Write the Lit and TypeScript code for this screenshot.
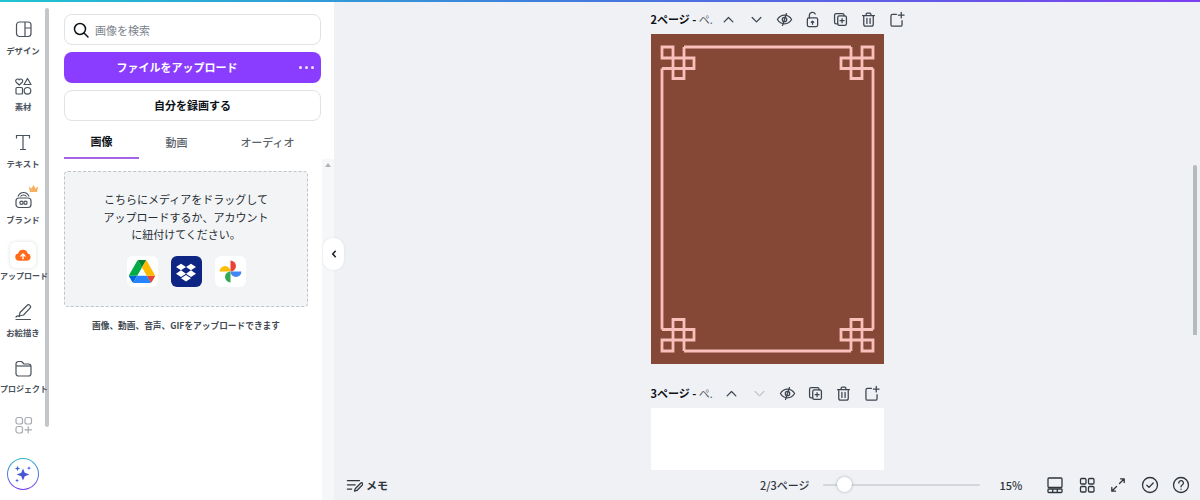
import { LitElement, html, svg, css } from 'lit';
import { customElement } from 'lit/decorators.js';

const line = (body: unknown, size = 19) => html`<svg width=${size} height=${size} viewBox="0 0 24 24" fill="none" stroke="currentColor" stroke-width="1.6" stroke-linecap="round" stroke-linejoin="round">${body}</svg>`;

const railIcons = {
    design: html`<svg width="24" height="24" viewBox="0 0 24 24" fill="none" stroke="currentColor" stroke-width="1.2"><rect x="5.5" y="5" width="14.5" height="14.5" rx="3"/><path d="M14 5v14.5M14 11h6"/></svg>`,
    elements: html`<svg width="24" height="24" viewBox="0 0 24 24" fill="none" stroke="currentColor" stroke-width="1.2" stroke-linejoin="round"><path d="M8.2 11l-3-2.800a1.900 1.900 0 0 1 0-2.600 1.900 1.900 0 0 1 3 .3 1.900 1.900 0 0 1 3-.3 1.900 1.900 0 0 1 0 2.600z"/><path d="M16.500 4.500l3.500 6h-7z"/><rect x="5" y="13.500" width="6.500" height="6.500" rx="1"/><circle cx="16.500" cy="16.800" r="3.300"/></svg>`,
    text: html`<svg width="24" height="24" viewBox="0 0 24 24" fill="none" stroke="currentColor" stroke-width="1.2" stroke-linecap="round"><path d="M5.500 8V5.500h13V8M12 5.500v14M9.500 19.500h5"/></svg>`,
    brand: html`<svg width="24" height="24" viewBox="0 0 24 24" fill="none" stroke="currentColor" stroke-width="1.2"><rect x="5" y="11" width="15" height="9.500" rx="3"/><path d="M7 9.500c1-2.500 3-4 5.500-4s4.500 1.500 5.500 4M9.500 9.500c.7-1 1.700-1.500 3-1.500s2.300.5 3 1.500"/><circle cx="10.500" cy="15.700" r="1.600"/><circle cx="14.500" cy="15.700" r="1.600"/></svg>`,
    draw: html`<svg width="24" height="24" viewBox="0 0 24 24" fill="none" stroke="currentColor" stroke-width="1.2" stroke-linecap="round" stroke-linejoin="round"><path d="M9 12.500l7-7a2 2 0 0 1 3 2.700l-6.500 6.800-4.300 1z"/><path d="M5 19.500h14.500M5 17c1-1 2.500-1.200 3.500-.5"/></svg>`,
    folder: html`<svg width="24" height="24" viewBox="0 0 24 24" fill="none" stroke="currentColor" stroke-width="1.2" stroke-linejoin="round"><path d="M5 8a2.500 2.500 0 0 1 2.500-2.500h3L13 8h4.500a2.500 2.500 0 0 1 2.500 2.500v7a2.500 2.500 0 0 1-2.500 2.500h-10A2.500 2.500 0 0 1 5 17.500z"/><path d="M5 10h15"/></svg>`,
    apps: html`<svg width="24" height="24" viewBox="0 0 24 24" fill="none" stroke="currentColor" stroke-width="1.2" stroke-linecap="round"><rect x="5" y="4.500" width="6.500" height="6.500" rx="2"/><rect x="14" y="4.500" width="6.500" height="6.500" rx="2"/><rect x="5" y="13.500" width="6.500" height="6.500" rx="2"/><path d="M17.200 13.500v6.500M14 16.800h6.500"/></svg>`,
};

const pageIcons = {
    up: line(svg`<path d="M6.500 15l5.500-5.500 5.500 5.500"/>`),
    down: line(svg`<path d="M6.500 9.500l5.500 5.500 5.500-5.500"/>`),
    eye: line(svg`<path d="M3 12s3.500-5.500 9-5.500 9 5.500 9 5.500-3.500 5.500-9 5.500-9-5.500-9-5.500z"/><circle cx="12" cy="12" r="2.800"/><path d="M14.500 4.500L9.500 19.500"/>`),
    lock: line(svg`<rect x="5.500" y="10" width="13" height="11" rx="2"/><path d="M8 10V6.500a4 4 0 0 1 7.500-1.500M12 18v-4M10.500 15.500L12 14l1.500 1.500"/>`),
    copy: line(svg`<path d="M8.500 17.500h-2a2 2 0 0 1-2-2v-9a2 2 0 0 1 2-2h8a2 2 0 0 1 2 2v1"/><rect x="8.500" y="7.500" width="11" height="12" rx="2"/><path d="M14 11v5M11.500 13.500h5"/>`),
    trash: line(svg`<path d="M4.500 7h15M9 7V5.500A1.500 1.500 0 0 1 10.500 4h3A1.500 1.500 0 0 1 15 5.500V7M6 7v11a2.500 2.500 0 0 0 2.500 2.500h7A2.500 2.500 0 0 0 18 18V7M10 10.500v6.500M14 10.500v6.500"/>`),
    add: line(svg`<path d="M12 5.500H7a2 2 0 0 0-2 2v11a2 2 0 0 0 2 2h10a2 2 0 0 0 2-2v-5M18 3v7M14.500 6.500h7"/>`),
};

const corners = [
    '',
    'translate(233 0) scale(-1 1)',
    'translate(0 330) scale(1 -1)',
    'translate(233 330) scale(-1 -1)',
];

const pageTwo = html`<svg width="233" height="330" viewBox="0 0 233 330" fill="none" stroke="#f9bfba" stroke-width="2.8">
    <path d="M33 13H200M33 317H200M11 34.500V295.500M222 34.500V295.500"/>
    ${corners.map(t => svg`<path transform=${t} d="M11 13h11v11H11zM22 24h11v10.500H22zM33 24h10v10.500H33zM22 34.500h11v10H22zM33 13v11M11 34.500h11"/>`)}
</svg>`;

const pages = [
    { title: '2ページ - ', tail: 'ペ.', titleWidth: 64, icons: [['up'], ['down'], ['eye'], ['lock'], ['copy'], ['trash'], ['add']] },
    { title: '3ページ - ', tail: 'ペ.', titleWidth: 67, icons: [['up'], ['down', 'off'], ['eye'], ['copy'], ['trash'], ['add']] },
];

const railItems = [
    { icon: railIcons.design, label: 'デザイン' },
    { icon: railIcons.elements, label: '素材' },
    { icon: railIcons.text, label: 'テキスト' },
    { icon: railIcons.brand, label: 'ブランド', crown: true },
    { icon: null, label: 'アップロード', long: true },
    { icon: railIcons.draw, label: 'お絵描き' },
    { icon: railIcons.folder, label: 'プロジェクト', long: true },
];

@customElement('app-root')
export class AppRoot extends LitElement {
    static styles = css`
        :host {
            display: block;
            position: relative;
            width: 1200px;
            height: 500px;
            overflow: hidden;
            background: #fff;
            color: #0d1216;
            font-family: "Noto Sans CJK JP", "Noto Sans", sans-serif;
            font-size: 11px;
        }
        .topbar {
            height: 2px;
            background: linear-gradient(90deg, #1fc4d0 0%, #3f7fdc 45%, #7d3ff0 100%);
        }
        .layout {
            display: flex;
            height: 498px;
        }

        .rail {
            position: relative;
            width: 50px;
            flex: none;
            display: flex;
            flex-direction: column;
            align-items: center;
            padding: 15px 4px 10px 0;
            box-sizing: border-box;
            color: #4a525c;
        }
        .rail-item {
            position: relative;
            z-index: 1;
            height: 56.5px;
            width: 46px;
            display: flex;
            flex-direction: column;
            align-items: center;
            flex: none;
        }
        .rail-item.short { height: 24px; color: #a4aab1; }
        .rail-item svg { display: block; flex: none; }
        .rail-label {
            margin-top: 1.5px;
            font-size: 8.4px;
            line-height: 14px;
            font-weight: 700;
            white-space: nowrap;
        }
        .rail-label.long {
            font-size: 8px;
            padding-left: 2px;
        }
        .crown { position: absolute; left: 28px; top: -3px; }
        .upload-tile {
            width: 26px;
            height: 26px;
            margin-top: -1px;
            margin-bottom: -1px;
            border-radius: 6px;
            background: #fff;
            box-shadow: 0 0 4px rgba(30, 40, 60, 0.14);
            display: flex;
            align-items: center;
            justify-content: center;
        }
        .magic {
            margin-top: auto;
            width: 32px;
            height: 32px;
            border-radius: 50%;
            box-sizing: border-box;
            padding: 1px;
            background: linear-gradient(180deg, #26b5c9, #7d3ff0);
            flex: none;
        }
        .magic div {
            width: 100%;
            height: 100%;
            border-radius: 50%;
            background: #fff;
            display: flex;
            align-items: center;
            justify-content: center;
        }
        .rail-thumb {
            position: absolute;
            left: 45px;
            top: 6px;
            width: 4px;
            height: 419px;
            border-radius: 2px;
            background: #c3c7ca;
        }

        .panel {
            width: 284px;
            flex: none;
            display: flex;
            flex-direction: column;
            background: #fff;
        }
        .tools {
            padding: 12px 13px 0 14px;
            display: flex;
            flex-direction: column;
            gap: 7px;
        }
        .search, .btn {
            height: 31px;
            box-sizing: border-box;
            border-radius: 8px;
            display: flex;
            align-items: center;
        }
        .search {
            border: 1px solid #dfe3e6;
            padding-left: 7px;
            gap: 5px;
            color: #7b848c;
        }
        .btn {
            justify-content: center;
            font-weight: 700;
            border: 1px solid #dfe3e6;
            padding-bottom: 2px;
        }
        .btn.primary {
            position: relative;
            border: none;
            background: #8b3dff;
            color: #fff;
            padding-right: 31px;
        }
        .dots {
            position: absolute;
            right: 7px;
            top: 14px;
            display: flex;
            gap: 3px;
        }
        .dots i {
            width: 3px;
            height: 3px;
            border-radius: 50%;
            background: #f0e6ff;
        }
        .tabs {
            display: flex;
            padding: 0 13px 0 14px;
            height: 38px;
        }
        .tab {
            width: 75px;
            flex: none;
            display: flex;
            align-items: center;
            justify-content: center;
            padding-top: 4px;
            box-sizing: border-box;
            color: #59626b;
            font-weight: 500;
        }
        .tab.wide { flex: 1; width: auto; }
        .tab.active {
            color: #0d1216;
            font-weight: 700;
            border-bottom: 2px solid #a564e6;
        }
        .panel-body {
            flex: 1;
            display: flex;
            min-height: 0;
        }
        .panel-content {
            flex: 1;
            padding: 12px 14px 0;
        }
        .gutter {
            width: 12px;
            flex: none;
            background: #f6f7f8;
            display: flex;
            justify-content: center;
            padding-top: 4px;
            box-sizing: border-box;
        }
        .gutter i {
            width: 0;
            height: 0;
            border: 3px solid transparent;
            border-top: 0;
            border-bottom: 4px solid #b0b4b8;
        }
        .drop {
            height: 136px;
            box-sizing: border-box;
            background: #f2f4f6;
            border: 1px dashed #c0c4c9;
            border-radius: 4px;
            padding-top: 19px;
            text-align: center;
            line-height: 17.5px;
            color: #262d33;
        }
        .services {
            display: flex;
            justify-content: center;
            gap: 13px;
            margin-top: 12.5px;
        }
        .tile {
            width: 31px;
            height: 31px;
            border-radius: 6px;
            background: #fff;
            display: flex;
            align-items: center;
            justify-content: center;
        }
        .tile.dropbox { background: #0e2583; }
        .caption {
            margin-top: 12px;
            text-align: center;
            font-size: 8.7px;
            line-height: 14px;
            font-weight: 700;
            color: #414952;
            white-space: nowrap;
        }

        .main {
            flex: 1;
            min-width: 0;
            display: flex;
            flex-direction: column;
            background: #f0f1f5;
        }
        .canvas {
            flex: 1;
            min-height: 0;
            overflow: hidden;
            display: flex;
            flex-direction: column;
            align-items: center;
            padding-top: 5px;
        }
        .page-wrap { width: 233px; flex: none; }
        .page-wrap + .page-wrap { margin-top: 17px; }
        .page-head {
            height: 25px;
            margin-bottom: 2px;
            display: flex;
            align-items: center;
            white-space: nowrap;
            color: #3d4550;
        }
        .page-title {
            flex: none;
            font-weight: 700;
            color: #0d1216;
            padding-bottom: 1px;
        }
        .page-title span { font-weight: 400; color: #59626b; }
        .page-btn {
            width: 28px;
            flex: none;
            display: flex;
            justify-content: center;
        }
        .page-btn.off { color: #c1c6cc; }
        .page {
            width: 233px;
            height: 330px;
        }
        .page svg { display: block; }
        .page.filled { background: #854836; }
        .page.blank { background: #fff; }

        .footer {
            height: 30px;
            flex: none;
            display: flex;
            align-items: center;
            padding: 0 3px 0 12px;
            color: #2e353c;
            font-weight: 500;
        }
        .memo {
            display: flex;
            align-items: center;
            gap: 3px;
            font-weight: 700;
        }
        .pager { margin-left: auto; }
        .slider {
            position: relative;
            width: 157px;
            height: 2px;
            margin: 0 20px 0 13px;
            background: #d3d6da;
            border-radius: 1px;
        }
        .slider i {
            position: absolute;
            left: 14px;
            top: -7px;
            width: 15px;
            height: 15px;
            border-radius: 50%;
            background: #fff;
            box-shadow: 0 0 3px rgba(30, 40, 60, 0.35);
        }
        .zoom { width: 22px; margin-right: 18px; }
        .foot-btn {
            width: 31.5px;
            display: flex;
            justify-content: center;
        }

        .collapse {
            position: absolute;
            left: 323px;
            top: 238px;
            width: 21px;
            height: 32px;
            border-radius: 10px;
            background: #fff;
            display: flex;
            align-items: center;
            justify-content: center;
            box-shadow: 0 0 3px rgba(30, 40, 60, 0.08);
        }
        .main-thumb {
            position: absolute;
            left: 1193px;
            top: 165px;
            width: 4px;
            height: 170px;
            background: #b6b9bd;
            border-radius: 2px 2px 0 0;
        }
    `;

    render() {
        return html`
            <div class="topbar"></div>
            <div class="layout">
                ${this.renderRail()}
                ${this.renderPanel()}
                <div class="main">
                    <div class="canvas">
                        ${pages.map((p, i) => html`
                            <div class="page-wrap">
                                <div class="page-head">
                                    <div class="page-title" style="width:${p.titleWidth}px">${p.title}<span>${p.tail}</span></div>
                                    ${p.icons.map(([name, off]) => html`
                                        <div class="page-btn ${off ?? ''}">${pageIcons[name as keyof typeof pageIcons]}</div>
                                    `)}
                                </div>
                                <div class="page ${i === 0 ? 'filled' : 'blank'}">${i === 0 ? pageTwo : ''}</div>
                            </div>
                        `)}
                    </div>
                    ${this.renderFooter()}
                </div>
            </div>
            <div class="collapse">
                <svg width="10" height="10" viewBox="0 0 10 10" fill="none" stroke="#1c2228" stroke-width="1.6" stroke-linecap="round" stroke-linejoin="round"><path d="M6.300 2.300L3.700 5l2.600 2.700"/></svg>
            </div>
            <div class="main-thumb"></div>
        `;
    }

    renderRail() {
        return html`
            <div class="rail">
                <div class="rail-thumb"></div>
                ${railItems.map(item => html`
                    <div class="rail-item">
                        ${item.icon ?? html`
                            <div class="upload-tile">
                                <svg width="18" height="18" viewBox="0 0 24 24"><path fill="#ff6b1a" d="M6.500 19.500a5 5 0 0 1-.8-9.900 6.500 6.500 0 0 1 12.500.4 4.800 4.800 0 0 1-.7 9.500z"/><path d="M12 17v-6M9.200 13.500L12 10.700l2.800 2.800" fill="none" stroke="#fff" stroke-width="1.8" stroke-linecap="round" stroke-linejoin="round"/></svg>
                            </div>
                        `}
                        <div class="rail-label ${item.long ? 'long' : ''}">${item.label}</div>
                        ${item.crown ? html`<svg class="crown" width="11" height="10" viewBox="0 0 11 10"><path fill="#f5b060" d="M1 2.500l2.600 2L5.500 .8l1.900 3.700 2.600-2-.9 5.500H1.900z"/></svg>` : ''}
                    </div>
                `)}
                <div class="rail-item short">${railIcons.apps}</div>
                <div class="magic"><div>
                    <svg width="22" height="22" viewBox="0 0 24 24"><defs><linearGradient id="spark" x1="0" y1="0" x2="1" y2="1"><stop offset="0" stop-color="#2f6fd8"/><stop offset="1" stop-color="#5b3fd0"/></linearGradient></defs><path fill="url(#spark)" d="M12 6l1.900 4.600L19 12.500l-5.100 1.900L12 19l-1.900-4.600L5 12.500l5.100-1.900zM6 3l.8 2.100L9 6l-2.200.9L6 9l-.8-2.100L3 6l2.200-.9zM18.500 3.500l.6 1.500 1.500.6-1.500.6-.6 1.500-.6-1.500-1.500-.6 1.500-.6zM5.500 17l.6 1.500 1.500.6-1.500.6-.6 1.500-.6-1.500-1.500-.6 1.500-.6z"/></svg>
                </div></div>
            </div>
        `;
    }

    renderPanel() {
        return html`
            <div class="panel">
                <div class="tools">
                    <div class="search">
                        <svg width="18" height="18" viewBox="0 0 18 18" fill="none" stroke="#0d1216" stroke-width="1.5" stroke-linecap="round"><circle cx="8" cy="8" r="5.500"/><path d="M12 12l4 4"/></svg>
                        <span>画像を検索</span>
                    </div>
                    <div class="btn primary">ファイルをアップロード<div class="dots"><i></i><i></i><i></i></div></div>
                    <div class="btn">自分を録画する</div>
                </div>
                <div class="tabs">
                    <div class="tab active">画像</div>
                    <div class="tab">動画</div>
                    <div class="tab wide">オーディオ</div>
                </div>
                <div class="panel-body">
                    <div class="panel-content">
                        <div class="drop">
                            こちらにメディアをドラッグして<br>アップロードするか、アカウント<br>に紐付けてください。
                            <div class="services">
                                <div class="tile">
                                    <svg width="26" height="23.2" viewBox="0 0 87.3 78"><path d="m6.600 66.850 3.850 6.650c.8 1.400 1.950 2.500 3.300 3.300l13.750-23.800h-27.500c0 1.550.4 3.100 1.200 4.500z" fill="#0066da"/><path d="m43.650 25-13.750-23.800c-1.350.8-2.500 1.900-3.300 3.300l-25.400 44a9.060 9.060 0 0 0 -1.200 4.500h27.500z" fill="#00ac47"/><path d="m73.550 76.800c1.350-.8 2.500-1.900 3.300-3.300l1.600-2.750 7.650-13.250c.8-1.400 1.200-2.950 1.200-4.500h-27.502l5.852 11.500z" fill="#ea4335"/><path d="m43.650 25 13.750-23.800c-1.350-.8-2.900-1.200-4.500-1.200h-18.500c-1.600 0-3.150.45-4.500 1.200z" fill="#00832d"/><path d="m59.800 53h-32.300l-13.750 23.800c1.350.8 2.900 1.200 4.500 1.200h50.800c1.600 0 3.150-.45 4.500-1.200z" fill="#2684fc"/><path d="m73.400 26.500-12.700-22c-.8-1.400-1.950-2.500-3.300-3.300l-13.750 23.800 16.150 28h27.450c0-1.550-.4-3.100-1.200-4.500z" fill="#ffba00"/></svg>
                                </div>
                                <div class="tile dropbox">
                                    <svg width="20" height="20" viewBox="0 0 24 24"><path fill="#fff" d="M6 2l6 4-6 4-6-4zM18 2l6 4-6 4-6-4zM0 14l6-4 6 4-6 4zM18 10l6 4-6 4-6-4zM6 19.500l6-4 6 4-6 4z"/></svg>
                                </div>
                                <div class="tile">
                                    <svg width="25" height="25" viewBox="0 0 24 24"><path fill="#fbbc04" d="M12 12H1.500a5.250 5.250 0 0 1 10.500 0z"/><path fill="#ea4335" d="M12 12V1.500a5.250 5.250 0 0 1 0 10.500z"/><path fill="#4285f4" d="M12 12h10.500a5.250 5.250 0 0 1-10.500 0z"/><path fill="#34a853" d="M12 12v10.500a5.250 5.250 0 0 1 0-10.500z"/></svg>
                                </div>
                            </div>
                        </div>
                        <div class="caption">画像、動画、音声、GIFをアップロードできます</div>
                    </div>
                    <div class="gutter"><i></i></div>
                </div>
            </div>
        `;
    }

    renderFooter() {
        return html`
            <div class="footer">
                <div class="memo">
                    <svg width="17" height="17" viewBox="0 0 24 24" fill="none" stroke="#2e353c" stroke-width="1.8" stroke-linecap="round" stroke-linejoin="round"><path d="M2 5h17M2 11h11M2 17h6M12 20l1-3.500 8-8a1.800 1.800 0 0 1 2.500 2.500l-8 8z"/></svg>
                    メモ
                </div>
                <div class="pager">2/3ページ</div>
                <div class="slider"><i></i></div>
                <div class="zoom">15%</div>
                <div class="foot-btn">
                    <svg width="20" height="20" viewBox="0 0 20 20" fill="none" stroke="#2e353c" stroke-width="1.3"><rect x="3" y="3" width="14" height="9.500" rx="1"/><rect x="3" y="14" width="14" height="3.500" rx=".8"/><path d="M7.700 14v3.500M12.300 14v3.500"/></svg>
                </div>
                <div class="foot-btn">
                    <svg width="20" height="20" viewBox="0 0 20 20" fill="none" stroke="#2e353c" stroke-width="1.3"><rect x="3.500" y="3.500" width="5.500" height="5.500" rx="1.200"/><rect x="11.500" y="3.500" width="5.500" height="5.500" rx="1.200"/><rect x="3.500" y="11.500" width="5.500" height="5.500" rx="1.200"/><rect x="11.500" y="11.500" width="5.500" height="5.500" rx="1.200"/></svg>
                </div>
                <div class="foot-btn">
                    <svg width="20" height="20" viewBox="0 0 20 20" fill="none" stroke="#2e353c" stroke-width="1.3" stroke-linecap="round" stroke-linejoin="round"><path d="M11.500 8.500L16 4M12.500 3.800H16.200V7.500M8.500 11.500L4 16M3.800 12.500V16.200H7.500"/></svg>
                </div>
                <div class="foot-btn">
                    <svg width="20" height="20" viewBox="0 0 20 20" fill="none" stroke="#2e353c" stroke-width="1.3" stroke-linecap="round" stroke-linejoin="round"><circle cx="10" cy="10" r="7.500"/><path d="M6.800 10.200l2.200 2.200 4.200-4.400"/></svg>
                </div>
                <div class="foot-btn">
                    <svg width="20" height="20" viewBox="0 0 20 20" fill="none" stroke="#2e353c" stroke-width="1.3" stroke-linecap="round" stroke-linejoin="round"><circle cx="10" cy="10" r="7.500"/><path d="M7.800 8a2.300 2.300 0 1 1 3.400 2c-.8.500-1.200 1-1.200 1.800"/><path d="M10 14.200v.1"/></svg>
                </div>
            </div>
        `;
    }
}
